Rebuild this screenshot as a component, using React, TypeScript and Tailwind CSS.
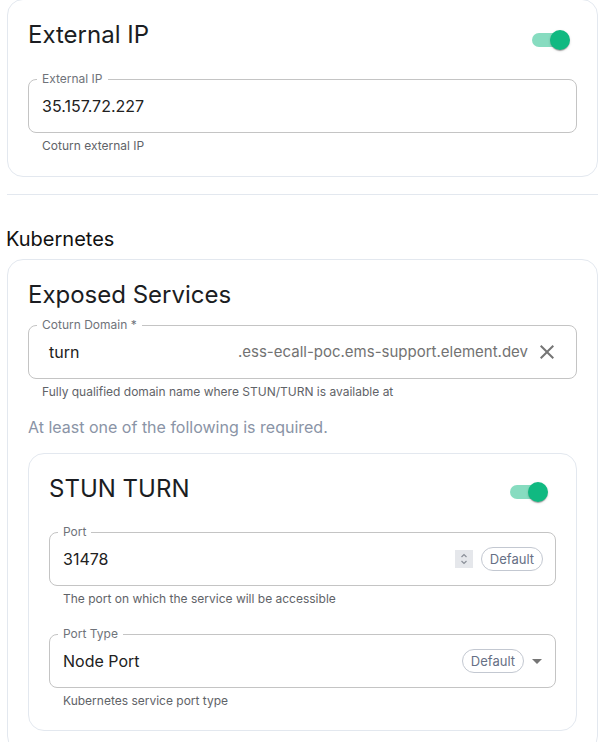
import React from 'react';

const font = { fontFamily: 'Inter, "Noto Sans", sans-serif' };

function Toggle({ className = '' }: { className?: string }) {
  return (
    <div className={`relative w-[38px] h-[20px] shrink-0 ${className}`}>
      <div className="absolute left-0 top-[3px] w-[34px] h-[14px] rounded-full bg-[#10b981]/50" />
      <div className="absolute right-0 top-0 w-[20px] h-[20px] rounded-full bg-[#10b981] shadow-[0_2px_1px_-1px_rgba(0,0,0,0.2),0_1px_1px_0_rgba(0,0,0,0.14),0_1px_3px_0_rgba(0,0,0,0.12)]" />
    </div>
  );
}

function Field({
  label,
  helper,
  className = '',
  children,
}: {
  label: string;
  helper: string;
  className?: string;
  children: React.ReactNode;
}) {
  return (
    <div className={className}>
      <div className="relative h-[54px] border border-[#c4c4c4] rounded-[8px] flex items-center">
        <span className="absolute left-[8px] top-[-7px] px-[5px] bg-white text-[12px] leading-[12px] text-[#6f737a]">
          {label}
        </span>
        {children}
      </div>
      <p className="mt-[3px] ml-[14px] text-[12px] leading-[20px] text-[#5f6368]">{helper}</p>
    </div>
  );
}

function DefaultChip() {
  return (
    <span className="h-[24px] px-[8px] rounded-full border border-[#c3c8d1] text-[13px] leading-[22px] text-[#667085]">
      Default
    </span>
  );
}

export default function App() {
  return (
    <div className="w-[598px] h-[742px] overflow-hidden bg-white" style={font}>
      <div className="ml-[7px] w-[591px]">
        <section className="mt-[-1px] border border-[#e3e8ef] rounded-[16px] px-5 pt-[19px] pb-5">
          <div className="flex items-start justify-between">
            <h2 className="text-[24px] leading-8 text-[#1b1d22]">External IP</h2>
            <Toggle className="mt-[11px] mr-[7px]" />
          </div>
          <Field label="External IP" helper="Coturn external IP" className="mt-[28px]">
            <span className="pl-[13px] text-[16px] text-[#212121]">35.157.72.227</span>
          </Field>
        </section>

        <div className="mt-[17px] h-px bg-[#e3e8ef]" />

        <h3 className="mt-[30px] ml-[-1px] text-[20px] leading-7 text-[#111111]">Kubernetes</h3>

        <section className="mt-[6px] border border-[#e3e8ef] rounded-[16px] px-5 pt-[19px] pb-5">
          <h2 className="text-[24px] leading-8 text-[#1b1d22]">Exposed Services</h2>
          <Field
            label="Coturn Domain *"
            helper="Fully qualified domain name where STUN/TURN is available at"
            className="mt-[14px]"
          >
            <span className="pl-[20px] text-[16px] text-[#212121] flex-1">turn</span>
            <span className="text-[15px] text-[#727272]">.ess-ecall-poc.ems-support.element.dev</span>
            <svg viewBox="0 0 24 24" className="w-[24px] h-[24px] ml-[7px] mr-[17px] fill-[#757575]">
              <path d="M19 6.41 17.59 5 12 10.59 6.41 5 5 6.41 10.59 12 5 17.59 6.41 19 12 13.41 17.59 19 19 17.59 13.41 12z" />
            </svg>
          </Field>

          <p className="mt-[13px] text-[16px] leading-6 text-[#8a94a6]">
            At least one of the following is required.
          </p>

          <div className="mt-[14px] border border-[#e3e8ef] rounded-[16px] px-5 pt-[19px] pb-[19px]">
            <div className="flex items-start justify-between">
              <h2 className="text-[24px] leading-8 text-[#1b1d22]">STUN TURN</h2>
              <Toggle className="mt-[9px] mr-[8px]" />
            </div>
            <Field
              label="Port"
              helper="The port on which the service will be accessible"
              className="mt-[27px]"
            >
              <span className="pl-[13px] text-[16px] text-[#212121] flex-1">31478</span>
              <div className="w-[18px] h-[18px] bg-[#e5e7eb] flex flex-col items-center justify-center">
                <svg viewBox="0 0 10 14" className="w-[10px] h-[14px] stroke-[#8a8f98] fill-none" strokeWidth="1.2">
                  <path d="M2.5 5 5 2.5 7.5 5M2.5 9 5 11.5 7.5 9" />
                </svg>
              </div>
              <div className="ml-[8px] mr-[12px] flex">
                <DefaultChip />
              </div>
            </Field>
            <Field label="Port Type" helper="Kubernetes service port type" className="mt-[25px]">
              <span className="pl-[13px] text-[16px] text-[#212121] flex-1">Node Port</span>
              <DefaultChip />
              <svg viewBox="0 0 10 5" className="w-[10px] h-[5px] ml-[8px] mr-[13px] fill-[#757575]">
                <path d="M0 0h10L5 5z" />
              </svg>
            </Field>
          </div>
        </section>
      </div>
    </div>
  );
}
